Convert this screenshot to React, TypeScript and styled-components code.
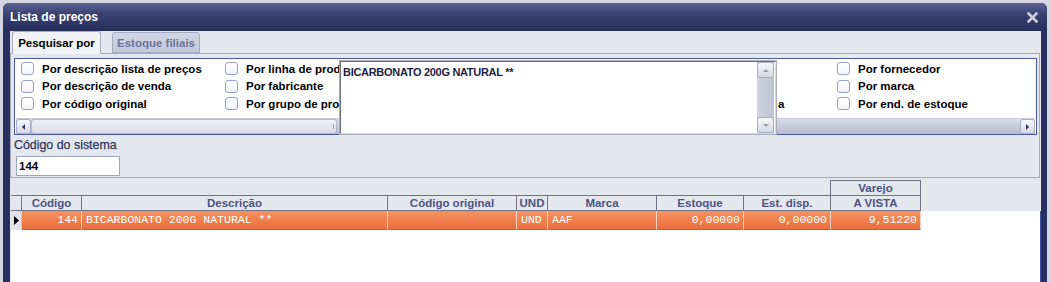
import React from "react";
import styled, { createGlobalStyle, css } from "styled-components";

const GlobalStyle = createGlobalStyle`
  html, body { margin: 0; padding: 0; }
  body {
    background: #d3d7e1;
    font-family: "Liberation Sans", Arial, sans-serif;
    overflow: hidden;
  }
`;

const Window = styled.div`
  margin: 3px 0 0 3px;
  width: 1044px;
  height: 279px;
  background: #283060;
  border-radius: 6px 6px 0 0;
  display: flex;
  flex-direction: column;
  overflow: hidden;
`;

const TitleBar = styled.div`
  height: 28px;
  flex: none;
  display: flex;
  align-items: center;
  justify-content: space-between;
  padding: 0 9px 0 7px;
  background: linear-gradient(#5b6493 0%, #3c4475 35%, #262d59 100%);
`;

const Title = styled.span`
  color: #ffffff;
  font-weight: bold;
  font-size: 12px;
  margin-top: -1px;
`;

const CloseIcon = () => (
  <svg width="11" height="11" viewBox="0 0 11 11">
    <path d="M1.5 1.5 L9.5 9.5 M9.5 1.5 L1.5 9.5" stroke="#cdd1de" strokeWidth="2.5" strokeLinecap="square" />
  </svg>
);

const Body = styled.div`
  flex: 1;
  margin: 0 6px 0 7px;
  background: #e4e7ee;
  display: flex;
  flex-direction: column;
  min-height: 0;
`;

const TabStrip = styled.div`
  height: 22px;
  flex: none;
  display: flex;
  align-items: flex-end;
  gap: 11px;
  padding-left: 2px;
  position: relative;
  z-index: 2;
`;

const Tab = styled.div<{ $active?: boolean }>`
  box-sizing: border-box;
  display: flex;
  align-items: center;
  justify-content: center;
  font-size: 11.5px;
  font-weight: bold;
  border: 1px solid #a6adc2;
  border-radius: 3px 3px 0 0;
  ${(p) =>
    p.$active
      ? css`
          width: 89px;
          height: 23px;
          margin-bottom: -1px;
          background: #f1f2f6;
          border-bottom-color: #f1f2f6;
          color: #000;
        `
      : css`
          width: 88px;
          height: 21px;
          background: linear-gradient(#d2d6e5, #c3c8db);
          color: #6b7299;
        `}
`;

const TabPanel = styled.div`
  box-sizing: border-box;
  height: 125px;
  flex: none;
  margin-right: 1px;
  border: 1px solid #a4aabc;
  padding: 4px 2px 0 3px;
  position: relative;
  display: flex;
  flex-direction: column;
  align-items: flex-start;
`;

const GroupBox = styled.div`
  box-sizing: border-box;
  align-self: stretch;
  height: 77px;
  border: 1px solid #4a58a8;
  background: #ffffff;
  display: flex;
  flex-direction: column;
  overflow: hidden;
`;

const OptionGrid = styled.div`
  flex: 1;
  display: grid;
  grid-template-columns: repeat(5, 204px);
  grid-auto-rows: 17.5px;
  padding: 1px 0 0 6px;
  overflow: hidden;
`;

const Option = styled.label`
  display: flex;
  align-items: center;
  gap: 8px;
  white-space: nowrap;
  font-size: 11.5px;
  font-weight: bold;
  color: #000;
  min-width: 0;
`;

const CheckBox = styled.span`
  box-sizing: border-box;
  width: 13px;
  height: 13px;
  flex: none;
  border: 1px solid #9aa2c2;
  border-radius: 3px;
  background: linear-gradient(#ffffff, #f3f4f8);
`;

const HScroll = styled.div`
  height: 16px;
  flex: none;
  margin: 0 1px 0 1px;
  display: flex;
  align-items: stretch;
  background: linear-gradient(#d9dce7, #b6bbce);
  border-top: 1px solid #c8ccd9;
  box-sizing: border-box;
`;

const ScrollButton = styled.div<{ $w?: number; $h?: number }>`
  box-sizing: border-box;
  width: ${(p) => p.$w ?? 15}px;
  height: ${(p) => p.$h ?? 15}px;
  flex: none;
  display: flex;
  align-items: center;
  justify-content: center;
  border: 1px solid #a8aec6;
  border-radius: 3px;
  background: linear-gradient(#f6f7fa, #d6d9e5);
`;

const HThumb = styled.div`
  box-sizing: border-box;
  width: 306px;
  height: 15px;
  border: 1px solid #b4b9cc;
  border-radius: 3px;
  background: linear-gradient(#eef0f4, #d9dce6);
  display: flex;
  align-items: center;
  justify-content: flex-end;
  padding-right: 2px;
`;

const Grip = styled.span`
  width: 1px;
  height: 5px;
  background: #9aa0b6;
`;

const Spacer = styled.div`
  flex: 1;
`;

const Memo = styled.div`
  position: absolute;
  left: 328px;
  top: 6px;
  box-sizing: border-box;
  width: 438px;
  height: 75px;
  border: 1px solid #a9adb8;
  background: #ffffff;
  display: flex;
  z-index: 3;
`;

const MemoInner = styled.div`
  flex: 1;
  display: flex;
  border: 1px solid #6e727e;
  border-right-color: #d8dae0;
  border-bottom-color: #d8dae0;
`;

const MemoText = styled.div`
  flex: 1;
  padding: 4px 0 0 2px;
  font-size: 11px;
  letter-spacing: -0.3px;
  font-weight: bold;
  color: #1c1f45;
`;

const VScroll = styled.div`
  width: 17px;
  margin: 0 1px 0 0;
  display: flex;
  flex-direction: column;
  background: linear-gradient(90deg, #d0d3de, #bfc3d3);
`;

const FieldLabel = styled.div`
  margin-top: 3px;
  height: 15px;
  line-height: 15px;
  font-size: 12.4px;
  color: #2f3759;
  -webkit-text-stroke: 0.25px #2f3759;
`;

const TextInput = styled.input`
  box-sizing: border-box;
  margin: 3px 0 0 2px;
  width: 104px;
  height: 20px;
  border: 1px solid #9fa5bb;
  background: #fff;
  padding: 0 0 0 2px;
  font-family: "Liberation Sans", Arial, sans-serif;
  font-size: 11.5px;
  font-weight: bold;
  color: #000;
  outline: none;
`;

const COLS = "11px 60px 306px 129px 31px 109px 87px 87px 90px";

const Grid = styled.div`
  flex: 1;
  margin: 2px 0 0 1px;
  display: flex;
  flex-direction: column;
  min-height: 0;
`;

const BandRow = styled.div`
  display: grid;
  grid-template-columns: ${COLS};
  height: 15px;
  flex: none;
`;

const BandCell = styled.div`
  grid-column: 9;
  box-sizing: border-box;
  border: 1px solid #6d7383;
  border-bottom: none;
  margin-left: -1px;
  text-align: center;
  font-size: 11.5px;
  font-weight: bold;
  line-height: 14px;
  color: #4b5486;
`;

const HeaderRow = styled.div`
  display: grid;
  grid-template-columns: ${COLS};
  height: 16px;
  flex: none;
`;

const HeaderCell = styled.div`
  box-sizing: border-box;
  border-top: 1px solid #6d7383;
  border-bottom: 1px solid #6d7383;
  border-right: 1px solid #6d7383;
  text-align: center;
  font-size: 11.5px;
  font-weight: bold;
  line-height: 14px;
  color: #4b5486;
  white-space: nowrap;
  overflow: hidden;
`;

const GridBody = styled.div`
  flex: 1;
  background: #ffffff;
  border-right: 1px solid #4352a2;
`;

const DataRow = styled.div`
  display: grid;
  grid-template-columns: ${COLS};
  height: 19px;
`;

const Indicator = styled.div`
  background: #dfe2ea;
  display: flex;
  align-items: center;
  justify-content: center;
  border-right: 1px solid #c8ccd8;
`;

const DataCell = styled.div<{ $right?: boolean }>`
  box-sizing: border-box;
  background: linear-gradient(#f7925f, #ea6e3c);
  border-right: 1px solid #f6d2bf;
  border-bottom: 1px solid #cf5b2c;
  font-family: "Liberation Mono", "Courier New", monospace;
  font-size: 11.5px;
  line-height: 18px;
  color: #ffffff;
  white-space: nowrap;
  overflow: hidden;
  padding: 0 3px 0 4px;
  text-align: ${(p) => (p.$right ? "right" : "left")};
`;

// columns of search options; the memo popup covers part of columns 2-4,
// so only the parts visible beside it are written
const options: string[][] = [
  ["Por descrição lista de preços", "Por descrição de venda", "Por código original"],
  ["Por linha de prod", "Por fabricante", "Por grupo de pro"],
  ["", "", ""],
  ["", "", ""],
  ["Por fornecedor", "Por marca", "Por end. de estoque"],
];

const HiddenTail = styled.span`
  padding-left: 124px;
`;

const headers = [
  "",
  "Código",
  "Descrição",
  "Código original",
  "UND",
  "Marca",
  "Estoque",
  "Est. disp.",
  "A VISTA",
];

const row: { v: string; right?: boolean }[] = [
  { v: "144", right: true },
  { v: "BICARBONATO 200G NATURAL **" },
  { v: "" },
  { v: "UND" },
  { v: "AAF" },
  { v: "0,00000", right: true },
  { v: "0,00000", right: true },
  { v: "9,51220", right: true },
];

const Tri = ({ dir, color }: { dir: "l" | "r" | "u" | "d"; color: string }) => {
  const d =
    dir === "l"
      ? "M4 0 L4 6 L1 3 Z"
      : dir === "r"
      ? "M1 0 L1 6 L4 3 Z"
      : dir === "u"
      ? "M0 4 L6 4 L3 1 Z"
      : "M0 1 L6 1 L3 4 Z";
  const w = dir === "l" || dir === "r" ? 5 : 6;
  const h = dir === "l" || dir === "r" ? 6 : 5;
  return (
    <svg width={w} height={h} viewBox={`0 0 ${w} ${h}`}>
      <path d={d} fill={color} />
    </svg>
  );
};

export default function App() {
  const cells: React.ReactNode[] = [];
  for (let r = 0; r < 3; r++) {
    for (let c = 0; c < 5; c++) {
      const t = options[c][r];
      const tail = c === 3 && r === 2;
      cells.push(
        <Option key={`${r}-${c}`}>
          <CheckBox />
          {t}
          {tail && <HiddenTail>a</HiddenTail>}
        </Option>
      );
    }
  }
  return (
    <>
      <GlobalStyle />
      <Window>
        <TitleBar>
          <Title>Lista de preços</Title>
          <CloseIcon />
        </TitleBar>
        <Body>
          <TabStrip>
            <Tab $active>Pesquisar por</Tab>
            <Tab>Estoque filiais</Tab>
          </TabStrip>
          <TabPanel>
            <GroupBox>
              <OptionGrid>{cells}</OptionGrid>
              <HScroll>
                <ScrollButton>
                  <Tri dir="l" color="#2c3358" />
                </ScrollButton>
                <HThumb>
                  <Grip />
                </HThumb>
                <Spacer />
                <ScrollButton>
                  <Tri dir="r" color="#2c3358" />
                </ScrollButton>
              </HScroll>
            </GroupBox>
            <Memo>
              <MemoInner>
                <MemoText>BICARBONATO 200G NATURAL **</MemoText>
                <VScroll>
                  <ScrollButton $w={17} $h={16}>
                    <Tri dir="u" color="#9a9eaa" />
                  </ScrollButton>
                  <Spacer />
                  <ScrollButton $w={17} $h={16}>
                    <Tri dir="d" color="#9a9eaa" />
                  </ScrollButton>
                </VScroll>
              </MemoInner>
            </Memo>
            <FieldLabel>Código do sistema</FieldLabel>
            <TextInput value="144" readOnly />
          </TabPanel>
          <Grid>
            <BandRow>
              <BandCell>Varejo</BandCell>
            </BandRow>
            <HeaderRow>
              {headers.map((h, i) => (
                <HeaderCell key={i}>{h}</HeaderCell>
              ))}
            </HeaderRow>
            <GridBody>
              <DataRow>
                <Indicator>
                  <svg width="5" height="9" viewBox="0 0 5 9">
                    <path d="M0 0 L5 4.5 L0 9 Z" fill="#000" />
                  </svg>
                </Indicator>
                {row.map((c, i) => (
                  <DataCell key={i} $right={c.right}>
                    {c.v}
                  </DataCell>
                ))}
              </DataRow>
            </GridBody>
          </Grid>
        </Body>
      </Window>
    </>
  );
}
